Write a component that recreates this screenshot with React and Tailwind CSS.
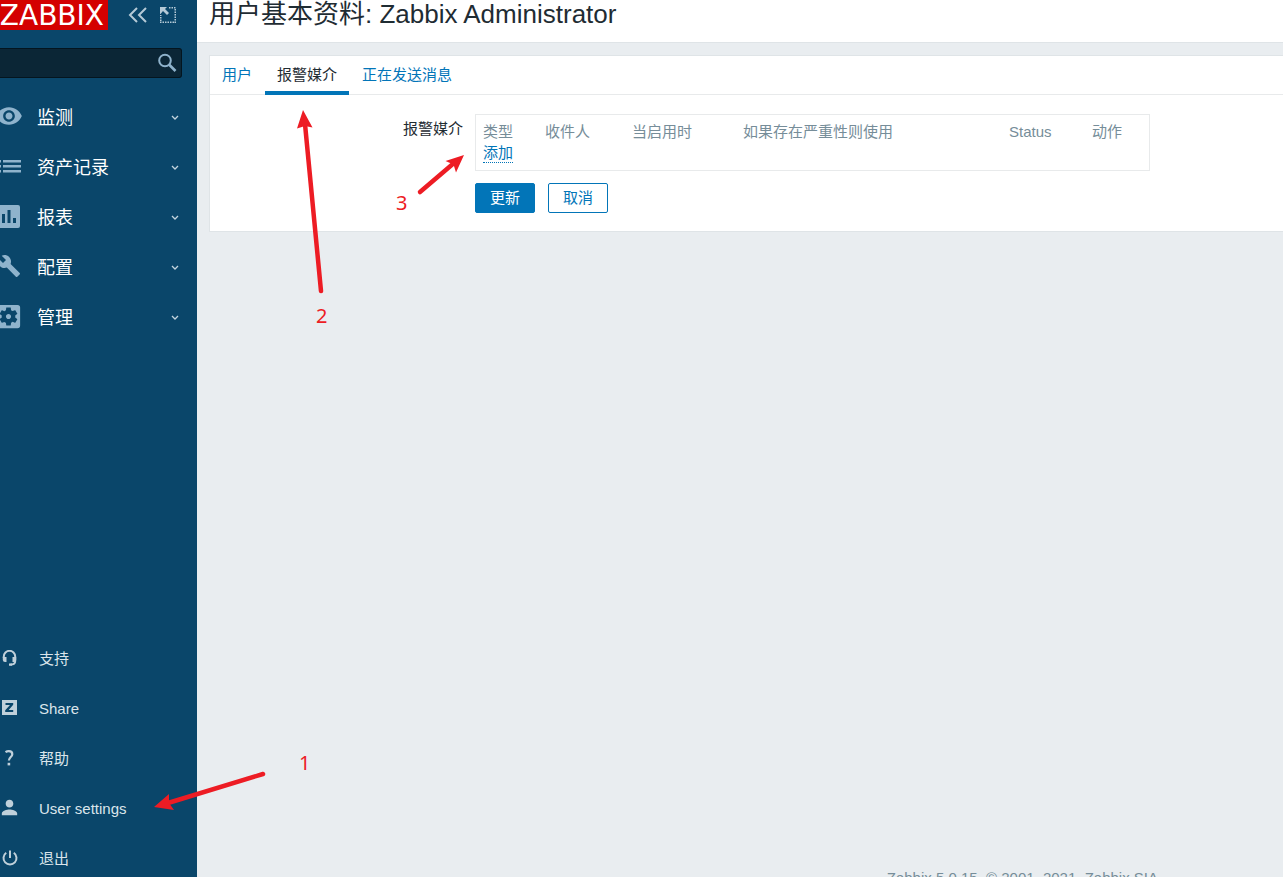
import { useState } from "react";
import { MdVisibility, MdBuild, MdSettingsApplications, MdPerson } from "react-icons/md";

const ListIcon = () => (
  <svg width="24" height="24" viewBox="0 0 24 24" fill="currentColor">
    <path d="M0 6h4v2.500H0zM6 6h18v2.500H6zM0 11h4v2.500H0zM6 11h18v2.500H6zM0 16h4v2.500H0zM6 16h18v2.500H6z" />
  </svg>
);

const ChartIcon = () => (
  <svg width="23" height="23" viewBox="0 0 23 23" fill="currentColor" fillRule="evenodd">
    <path d="M2 0h19a2 2 0 0 1 2 2v19a2 2 0 0 1-2 2H2a2 2 0 0 1-2-2V2a2 2 0 0 1 2-2zM5 9v9h3V9zM10.500 5v13h3V5zM16 13v5h3v-5z" />
  </svg>
);

const HeadsetIcon = () => (
  <svg width="15" height="16" viewBox="0 0 15 16" fill="none" stroke="currentColor">
    <path d="M1.800 8V6.500a5.700 5.700 0 0 1 11.400 0V11c0 2-1.700 3.600-4.700 3.600" strokeWidth="2" />
    <path d="M.8 7h3.700v5H3a2.200 2.200 0 0 1-2.200-2zM14.200 7h-3.700v5H12a2.200 2.200 0 0 0 2.200-2zM7 13.500h3v2.200H7z" fill="currentColor" stroke="none" />
  </svg>
);

const ShareIcon = () => (
  <svg width="15" height="15" viewBox="0 0 15 15" fill="currentColor" fillRule="evenodd">
    <path d="M0 0h15v15H0zM3.500 3v2h4.500L3.200 10.200V12h8v-2H6.700l4.500-5.200V3z" />
  </svg>
);

const HelpIcon = () => (
  <svg width="15" height="16" viewBox="0 0 15 16" fill="none" stroke="currentColor" strokeWidth="2.200">
    <path d="M3.500 2.200C4.500 1.500 5.600 1.200 6.800 1.200c2.200 0 3.500 1.200 3.500 3 0 2.800-3.400 3-3.400 6.400" />
    <path d="M6.900 12.800v2.600" strokeWidth="2.600" />
  </svg>
);

const PowerIcon = () => (
  <svg width="16" height="16" viewBox="0 0 16 16" fill="none" stroke="currentColor" strokeWidth="2">
    <path d="M8 .5v7.500M4.200 2.800a6.500 6.500 0 1 0 7.600 0" />
  </svg>
);

const menu = [
  { label: "监测", icon: <MdVisibility size={28} /> },
  { label: "资产记录", icon: <ListIcon /> },
  { label: "报表", icon: <ChartIcon /> },
  { label: "配置", icon: <MdBuild size={24} /> },
  { label: "管理", icon: <MdSettingsApplications size={31} /> },
];

const userMenu = [
  { label: "支持", icon: <HeadsetIcon /> },
  { label: "Share", icon: <ShareIcon /> },
  { label: "帮助", icon: <HelpIcon /> },
  { label: "User settings", icon: <MdPerson size={23} /> },
  { label: "退出", icon: <PowerIcon /> },
];

const tabs = ["用户", "报警媒介", "正在发送消息"];

const columns = [
  { label: "类型", width: "w-[62px]" },
  { label: "收件人", width: "w-[87px]" },
  { label: "当启用时", width: "w-[111px]" },
  { label: "如果存在严重性则使用", width: "w-[266px]" },
  { label: "Status", width: "w-[83px]" },
  { label: "动作", width: "" },
];

function Sidebar() {
  return (
    <aside className="flex w-[197px] shrink-0 flex-col bg-[#0a466a]">
      <div className="flex h-[30px] items-center">
        <a href="#" className="flex h-full w-[108px] items-center justify-end bg-[#d40000] pt-[2px] pr-1 font-['DejaVu_Sans',sans-serif] text-[28px] leading-none text-white">
          ZABBIX
        </a>
        <button type="button" aria-label="Collapse" className="ml-5 text-[#b5cad7]">
          <svg width="20" height="16" viewBox="0 0 20 16" fill="none" stroke="currentColor" strokeWidth="2">
            <path d="M9 1L2 8l7 7M18 1l-7 7 7 7" />
          </svg>
        </button>
        <button type="button" aria-label="Hide" className="ml-3 text-[#b5cad7]">
          <svg width="16" height="16" viewBox="0 0 16 16" fill="none" stroke="currentColor">
            <path d="M9 .75h7M15.250 2v14M14 15.250H0M.75 14V8" strokeWidth="1.500" strokeDasharray="1.500 1" />
            <path d="M0 0h7L5 2l4 4-2 2-4-4-2.500 3H0z" fill="currentColor" stroke="none" />
          </svg>
        </button>
      </div>

      <form className="mt-[18px] mr-[15px] flex h-[30px] items-center rounded-r-[3px] border border-l-0 border-[#04151f] bg-[#0b2636]">
        <input type="text" aria-label="Search" className="min-w-0 flex-1 bg-transparent px-2 text-[15px] text-white outline-none" />
        <button type="button" aria-label="Search" className="mr-1 text-[#8fb3cc]">
          <svg width="20" height="20" viewBox="0 0 20 20" fill="none" stroke="currentColor" strokeWidth="2">
            <circle cx="8" cy="7.500" r="5.800" />
            <path d="M12 11.500l6.500 6.500" strokeWidth="2.600" />
          </svg>
        </button>
      </form>

      <nav className="mt-[15px] flex flex-col">
        {menu.map((item) => (
          <a key={item.label} href="#" className="flex h-[50px] items-center text-[18px] text-white">
            <span className="flex w-[17px] shrink-0 justify-center pb-1 text-[#8fb3cc] *:shrink-0">{item.icon}</span>
            <span className="ml-5 flex-1">{item.label}</span>
            <svg className="mr-[18px] text-[#c5d5df]" width="8" height="6" viewBox="0 0 8 6" fill="none" stroke="currentColor" strokeWidth="1.300">
              <path d="M1 1l3 3 3-3" />
            </svg>
          </a>
        ))}
      </nav>

      <nav className="mt-auto -mb-[7px] flex flex-col">
        {userMenu.map((item) => (
          <a key={item.label} href="#" className="flex h-[50px] items-center text-[15px] text-[#dbe5eb]">
            <span className="flex w-[19px] shrink-0 justify-center pb-[3px] text-[#c0d0da] *:shrink-0">{item.icon}</span>
            <span className="ml-5">{item.label}</span>
          </a>
        ))}
      </nav>
    </aside>
  );
}

function MediaForm() {
  return (
    <form className="pt-[19px] pb-[18px]">
      <div className="flex">
        <span id="media-label" className="w-[253px] shrink-0 pt-1 text-right leading-[22px]">报警媒介</span>
        <div className="ml-3 w-[675px] border border-[#e8eaeb] px-[7px] pt-[6px] pb-[7px]">
          <table aria-labelledby="media-label" className="w-full table-fixed">
            <thead>
              <tr>
                {columns.map((col) => (
                  <th key={col.label} className={`p-0 text-left leading-[22px] font-normal whitespace-nowrap text-[#768d99] ${col.width}`}>
                    {col.label}
                  </th>
                ))}
              </tr>
            </thead>
            <tbody>
              <tr>
                <td colSpan={6} className="p-0">
                  <button type="button" className="block h-5 border-b border-dotted border-[#0275b8] leading-5 text-[#0275b8]">
                    添加
                  </button>
                </td>
              </tr>
            </tbody>
          </table>
        </div>
      </div>
      <div className="mt-3 ml-[265px] flex gap-[13px]">
        <button type="button" className="h-[30px] w-[60px] rounded-[2px] border border-[#0275b8] bg-[#0275b8] text-white">
          更新
        </button>
        <button type="button" className="h-[30px] w-[60px] rounded-[2px] border border-[#0275b8] bg-white text-[#0275b8]">
          取消
        </button>
      </div>
    </form>
  );
}

function Annotations() {
  return (
    <svg className="pointer-events-none absolute inset-0 h-full w-full" fill="#ed1c24">
      <g stroke="#ed1c24" strokeWidth="4.500" strokeLinecap="round">
        <path d="M263 774L168 803" />
        <path d="M321 291L305 124" />
        <path d="M420 192L454 163" />
      </g>
      <path d="M154 807L169 794L169 803L174 810z" />
      <path d="M303 110L312.500 127.500L305 126L297 128.500z" />
      <path d="M464 155L456 172.500L453.500 164.500L445.500 161z" />
      <g fontSize="20" fontFamily="'Noto Sans', sans-serif">
        <text x="299" y="770">1</text>
        <text x="316" y="323">2</text>
        <text x="396" y="210">3</text>
      </g>
    </svg>
  );
}

export default function App() {
  const [active, setActive] = useState("报警媒介");

  return (
    <div className="relative flex h-screen overflow-hidden bg-[#e9edf0] font-['Liberation_Sans','Noto_Sans_CJK_SC',sans-serif] text-[15px] text-[#1f2c33]">
      <Sidebar />
      <main className="flex min-w-0 flex-1 flex-col">
        <header className="flex h-[43px] shrink-0 items-start border-b border-[#dfe4e7] bg-white pl-3">
          <h1 className="text-[26px] leading-[29px] whitespace-nowrap">用户基本资料: Zabbix Administrator</h1>
        </header>

        <section className="mt-3 ml-3 border-y border-l border-[#dfe4e7] bg-white">
          <div role="tablist" className="flex h-[39px] gap-px border-b border-[#e8eaeb]">
            {tabs.map((tab) => (
              <button
                key={tab}
                type="button"
                role="tab"
                aria-selected={active === tab}
                onClick={() => setActive(tab)}
                className={`h-[39px] border-b-4 px-3 pt-1 ${
                  active === tab ? "border-[#0275b8] text-[#1f2c33]" : "border-transparent text-[#0275b8]"
                }`}
              >
                {tab}
              </button>
            ))}
          </div>
          <MediaForm />
        </section>

        <footer className="mt-auto -mb-[12px] flex justify-end pr-[125px] leading-[22px] text-[#768d99]">
          Zabbix 5.0.15. © 2001–2021, Zabbix SIA
        </footer>
      </main>
      <Annotations />
    </div>
  );
}
